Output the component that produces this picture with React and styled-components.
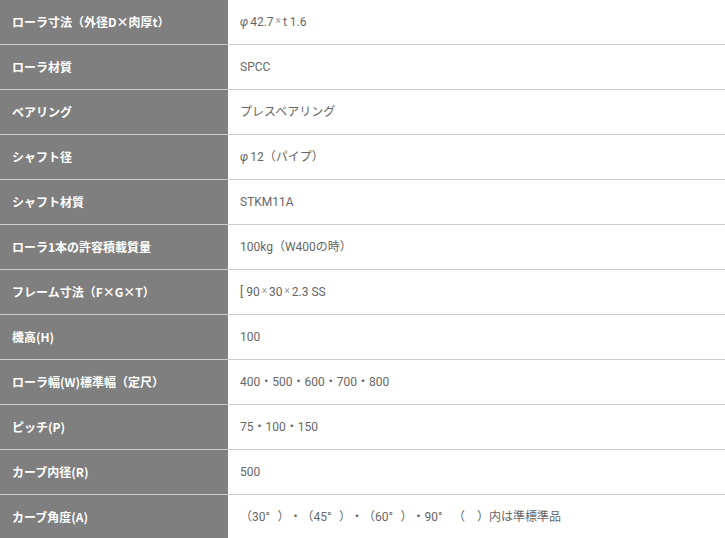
import React from "react";
import styled, { createGlobalStyle } from "styled-components";

const GlobalStyle = createGlobalStyle`
  body {
    margin: 0;
    background: #fff;
    font-family: Roboto, "Liberation Sans", "Noto Sans CJK JP", sans-serif;
    text-spacing-trim: space-all;
  }
`;

const SpecTable = styled.table`
  width: 725px;
  border-collapse: collapse;
  table-layout: fixed;
`;

const Row = styled.tr`
  border-bottom: 1px solid #cccccc;

  &:first-child > * {
    height: 44px;
  }
`;

const Head = styled.th`
  width: 228px;
  height: 45px;
  padding: 0 0 0 12px;
  box-sizing: border-box;
  background: #7f7f7f;
  color: #ffffff;
  font-size: 12px;
  line-height: 16px;
  font-weight: 700;
  text-align: left;
  vertical-align: middle;
  white-space: nowrap;
  font-family: "Noto Sans CJK JP", sans-serif;
`;

const Cell = styled.td`
  height: 45px;
  padding: 0 0 0 12px;
  box-sizing: border-box;
  color: #666666;
  font-size: 12px;
  line-height: 16px;
  font-weight: 400;
  vertical-align: middle;
  white-space: nowrap;
`;

/* degree sign drawn full-width, as the Japanese font does */
const Deg = styled.span`
  display: inline-block;
  width: 1em;
`;

const Phi = styled.span`
  margin-right: 2px;
  font-style: italic;
`;

const Times = styled.span`
  font-size: 10px;
  margin: 0 2px;
  color: #999999;
  vertical-align: 2px;
`;

const specs = [
  ["ローラ寸法（外径D×肉厚t）", <><Phi>φ</Phi>42.7<Times>×</Times>t 1.6</>],
  ["ローラ材質", "SPCC"],
  ["ベアリング", "プレスベアリング"],
  ["シャフト径", <><Phi>φ</Phi>12（パイプ）</>],
  ["シャフト材質", "STKM11A"],
  ["ローラ1本の許容積載質量", "100kg（W400の時）"],
  ["フレーム寸法（F×G×T）", <>[ 90<Times>×</Times>30<Times>×</Times>2.3 SS</>],
  ["機高(H)", "100"],
  ["ローラ幅(W)標準幅（定尺）", "400・500・600・700・800"],
  ["ピッチ(P)", "75・100・150"],
  ["カーブ内径(R)", "500"],
  [
    "カーブ角度(A)",
    <>
      （30<Deg>°</Deg>）・（45<Deg>°</Deg>）・（60<Deg>°</Deg>）・90<Deg>°</Deg> （　）内は準標準品
    </>,
  ],
];

export default function App() {
  return (
    <>
      <GlobalStyle />
      <SpecTable>
        <tbody>
          {specs.map(([label, value]) => (
            <Row key={label}>
              <Head>{label}</Head>
              <Cell>{value}</Cell>
            </Row>
          ))}
        </tbody>
      </SpecTable>
    </>
  );
}
